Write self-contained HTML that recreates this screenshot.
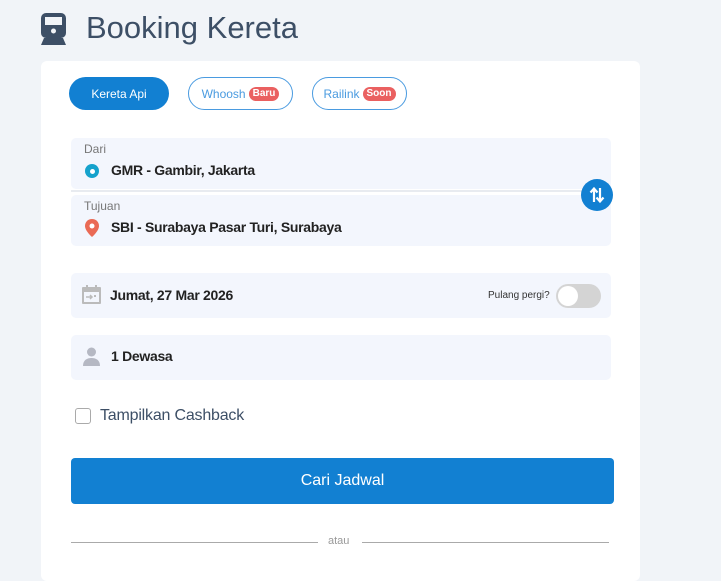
<!DOCTYPE html>
<html><head><meta charset="utf-8"><style>
*{margin:0;padding:0;box-sizing:border-box}
body{width:721px;height:559px;overflow:hidden;background:#f1f4f8;font-family:"Liberation Sans",sans-serif;position:relative}
.a{position:absolute}
.card{left:41px;top:61px;width:599px;height:520px;background:#fff;border-radius:6px}
.tab{top:77px;height:33px;border-radius:17px;font-size:12px;display:flex;align-items:center;justify-content:center;gap:3px}
.on{background:#1280d2;color:#fff}
.off{border:1px solid #4a9be0;color:#4a9be0;background:#fff}
.badge{display:inline-block;background:#ea6060;color:#fff;font-size:10px;line-height:14px;font-weight:bold;border-radius:8px;padding:0 4px}
.box{left:71px;width:540px;background:#f3f6fd;border-radius:5px}
.lbl{font-size:12px;color:#777}
.val{font-size:14px;color:#222;font-weight:bold;letter-spacing:-0.3px}
</style></head><body>
<svg class="a" style="left:40px;top:13px" width="27" height="33" viewBox="0 0 27 33"><rect x="1" y="0" width="25" height="25" rx="5" fill="#3d4f66"/><rect x="5" y="4" width="17" height="8" fill="#f1f4f8"/><circle cx="13.5" cy="18" r="2.5" fill="#f1f4f8"/><path d="M4 25 L1 32 H26 L23 25 Z" fill="#3d4f66"/></svg>
<div class="a" style="left:86px;top:10px;font-size:31px;color:#3d4f66">Booking Kereta</div>
<div class="a card"></div>
<div class="a tab on" style="left:69px;width:100px">Kereta Api</div>
<div class="a tab off" style="left:188px;width:105px">Whoosh <span class="badge">Baru</span></div>
<div class="a tab off" style="left:312px;width:95px">Railink <span class="badge">Soon</span></div>
<div class="a box" style="top:138px;height:51px"></div>
<div class="a" style="left:71px;top:190px;width:540px;height:2px;background:#e8ebf0"></div>
<div class="a box" style="top:195px;height:51px"></div>
<div class="a lbl" style="left:84px;top:142px">Dari</div>
<div class="a" style="left:85px;top:164px;width:14px;height:14px;border-radius:50%;background:#15a2cc"></div>
<div class="a" style="left:89.5px;top:168.5px;width:5px;height:5px;border-radius:50%;background:#fff"></div>
<div class="a val" style="left:111px;top:162px">GMR - Gambir, Jakarta</div>
<div class="a lbl" style="left:84px;top:199px">Tujuan</div>
<svg class="a" style="left:85px;top:219px" width="14" height="18" viewBox="0 0 14 18"><path d="M7 0C3 0 0 3 0 7c0 5 7 11 7 11s7-6 7-11c0-4-3-7-7-7z" fill="#ea6a55"/><circle cx="7" cy="7" r="2.5" fill="#fff"/></svg>
<div class="a val" style="left:111px;top:219px">SBI - Surabaya Pasar Turi, Surabaya</div>
<div class="a" style="left:581px;top:179px;width:32px;height:32px;border-radius:50%;background:#1280d2"></div>
<svg class="a" style="left:587px;top:185px" width="20" height="20" viewBox="0 0 20 20"><path d="M7 17V4M3.5 7.5L7 3.5l3.5 4M13 3v13M9.5 12.5l3.5 4 3.5-4" stroke="#fff" stroke-width="2.2" fill="none"/></svg>
<div class="a box" style="top:273px;height:45px"></div>
<svg class="a" style="left:82px;top:285px" width="19" height="19" viewBox="0 0 19 19"><rect x="0" y="2" width="19" height="17" rx="1" fill="#bbb"/><rect x="4" y="0" width="2" height="4" fill="#bbb"/><rect x="13" y="0" width="2" height="4" fill="#bbb"/><rect x="2" y="7" width="15" height="10" fill="#f3f6fd"/><path d="M4 12h6M8 10l2 2-2 2" stroke="#bbb" stroke-width="1.5" fill="none"/><rect x="12" y="10" width="2" height="2" fill="#bbb"/></svg>
<div class="a val" style="left:110px;top:287px">Jumat, 27 Mar 2026</div>
<div class="a" style="left:488px;top:290px;font-size:10px;color:#333">Pulang pergi?</div>
<div class="a" style="left:556px;top:284px;width:45px;height:24px;border-radius:12px;background:#d4d4d4"></div>
<div class="a" style="left:558px;top:286px;width:20px;height:20px;border-radius:50%;background:#fff"></div>
<div class="a box" style="top:335px;height:45px"></div>
<svg class="a" style="left:82px;top:347px" width="19" height="20" viewBox="0 0 19 20"><circle cx="9.5" cy="5" r="4.5" fill="#b5b8c3"/><path d="M1 19c0-6 4-8 8.5-8s8.5 2 8.5 8z" fill="#b5b8c3"/></svg>
<div class="a val" style="left:111px;top:348px">1 Dewasa</div>
<div class="a" style="left:75px;top:408px;width:16px;height:16px;border:1px solid #aaa;border-radius:3px;background:#fff"></div>
<div class="a" style="left:100px;top:407px;font-size:16px;color:#3d4f66;letter-spacing:-0.2px">Tampilkan Cashback</div>
<div class="a" style="left:71px;top:458px;width:543px;height:46px;background:#1280d2;border-radius:4px;color:#fff;font-size:16px;display:flex;align-items:center;justify-content:center">Cari Jadwal</div>
<div class="a" style="left:71px;top:542px;width:247px;height:1px;background:#aaa"></div>
<div class="a" style="left:328px;top:535px;font-size:11px;color:#999">atau</div>
<div class="a" style="left:362px;top:542px;width:247px;height:1px;background:#aaa"></div>
</body></html>
